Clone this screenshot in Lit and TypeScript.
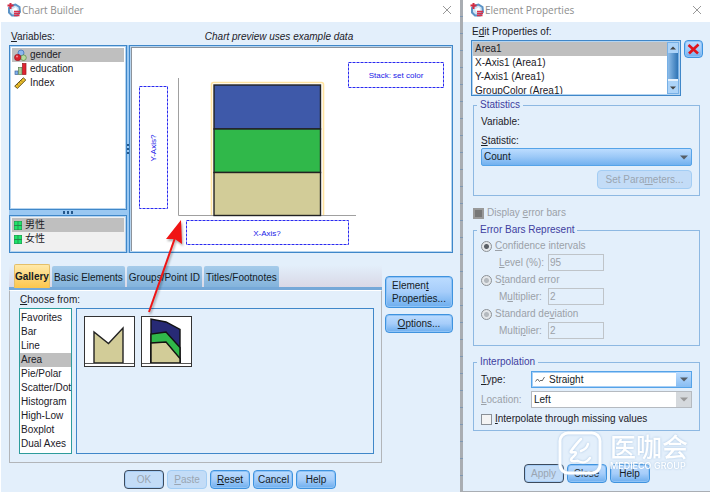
import { LitElement, html, css, svg } from "lit";
import { customElement, property, state } from "lit/decorators.js";
import { classMap } from "lit/directives/class-map.js";

const shared = css`
  * { box-sizing: border-box; }
  ul { list-style: none; margin: 0; padding: 0; }
  u { text-underline-offset: 1px; }
  button {
    font: inherit;
    color: #141c26;
    height: 19px;
    padding: 0 4px;
    border: 1px solid #3f93df;
    border-radius: 4px;
    background: linear-gradient(#bcdcff, #a6cdfa 50%, #6daeee);
    box-shadow: inset 0 0 0 1px #8fc3f6;
  }
  button:disabled {
    color: #9aa5b1;
    border-color: #a3cdf4;
    background: #c3dcf7;
    box-shadow: none;
  }
  button.default {
    border-color: #3c4a5c;
    box-shadow: inset 0 0 0 1px #a6cdf6;
  }
  .footer {
    display: flex;
    justify-content: center;
    gap: 3px;
  }
  .footer button { width: 40px; }
`;

@customElement("window-title")
class WindowTitle extends LitElement {
  @property() label = "";
  static styles = css`
    :host {
      display: flex;
      align-items: center;
      gap: 1px;
      height: 22px;
      padding: 0 8px 2px 7px;
      background: #fff;
      color: #8d8d8d;
      font: 10px/14px "Open Sans", sans-serif;
    }
    .name { flex: 1; font: inherit; margin: 0; }
    .close { border: 0; padding: 0; background: none; height: 10px; width: 10px; display: block; }
    svg { display: block; }
  `;
  render() {
    return html`
      <svg width="14" height="14" viewBox="0 0 14 14" aria-hidden="true">
        <path d="M5 2.5 8.5 1.5 12.5 4 13 9 10 12.5 5 12.5 2 9.5 2 5Z" fill="#cfe3f4" stroke="#5b93c6" stroke-width="2" />
        <path d="M5 6.5 9 4 10.5 7 7 9.5Z" fill="#fff" />
        <path d="M3.5 0V6M0.5 2.5H6.5" stroke="#d32a42" stroke-width="2" />
        <path d="M7 8.5H13M7 10.5H13M7 12.5H12.5" stroke="#d9304a" stroke-width="1.6" />
      </svg>
      <h1 class="name">${this.label}</h1>
      <button class="close" aria-label="Close window">
        <svg width="10" height="10" viewBox="0 0 10 10"><path d="M1 1 9 9M9 1 1 9" stroke="#999" stroke-width="1" /></svg>
      </button>
    `;
  }
}

const scaleIcons: Record<string, unknown> = {
  nominal: svg`
    <circle cx="7" cy="4" r="3" fill="#8db8ee" stroke="#3f72bd" stroke-width="0.8" />
    <circle cx="9.5" cy="8.7" r="2.8" fill="#b8dba0" stroke="#62904c" stroke-width="0.8" />
    <circle cx="3.7" cy="8.5" r="3.2" fill="#d9202c" stroke="#8f1820" stroke-width="0.6" />
    <circle cx="3" cy="7.5" r="0.9" fill="#f4a0a4" />`,
  ordinal: svg`
    <rect x="1" y="8" width="3" height="3.5" fill="#7eb2ee" stroke="#44669a" stroke-width="0.7" />
    <rect x="4.5" y="4.5" width="3.5" height="7" fill="#a9cf9c" stroke="#5b7f52" stroke-width="0.7" />
    <rect x="8.5" y="0.5" width="3.5" height="11" fill="#e02430" stroke="#971a22" stroke-width="0.7" />`,
  scale: svg`
    <path d="M0.7 9.2 9.3 0.8 11.8 3 3.4 11.4Z" fill="#edc02c" stroke="#574616" stroke-width="0.9" />
    <path d="M3 7.3 4 8.3M5 5.4 6 6.4M7 3.5 8 4.5" stroke="#4c3c10" stroke-width="0.9" />`,
};

@customElement("chart-preview")
class ChartPreview extends LitElement {
  static styles = css`
    :host {
      display: block;
      background: #fff;
      border: 1px solid #3f87c9;
      box-shadow: inset 0 0 0 1px #b5d4f0, inset 2px 2px 0 #8d939b;
    }
    svg { display: block; width: 100%; }
    .zone { fill: none; stroke: #2a2af0; stroke-dasharray: 3 1; }
    .prompt { fill: #2020e8; font: 8px "Liberation Sans", sans-serif; text-anchor: middle; }
    .bar { stroke: #222; stroke-width: 1.4; }
    .axis { stroke: #a0a0a0; }
  `;
  render() {
    return html`
      <svg height="206" viewBox="0 0 322 206" role="img" aria-label="Stacked area chart preview">
        <path class="axis" d="M48.5 32V169.5H226" fill="none" />
        <path d="M81.500 169V38.500Q81.500 36.500 83.500 36.500H191.500Q193.500 36.500 193.500 38.500V169" fill="none" stroke="#ffe3a0" stroke-width="1.600" />
        <rect class="bar" x="84" y="39" width="106.500" height="44" fill="#3e59a9" />
        <rect class="bar" x="84" y="83" width="106.500" height="43.500" fill="#30b84a" />
        <rect class="bar" x="84" y="126.500" width="106.500" height="43" fill="#d2cc98" />
        <rect class="zone" x="9.500" y="40.500" width="28" height="122" />
        <rect class="zone" x="56.500" y="174.500" width="162" height="24" />
        <rect class="zone" x="218.500" y="16.500" width="95" height="25" />
        <text class="prompt" x="266" y="32">Stack: set color</text>
        <text class="prompt" x="137" y="190">X-Axis?</text>
        <text class="prompt" transform="translate(26 102) rotate(-90)">Y-Axis?</text>
      </svg>
    `;
  }
}

@customElement("chart-builder")
class ChartBuilder extends LitElement {
  @state() private category = "Area";
  private variables = [
    { name: "gender", scale: "nominal" },
    { name: "education", scale: "ordinal" },
    { name: "Index", scale: "scale" },
  ];
  private categories = ["Favorites", "Bar", "Line", "Area", "Pie/Polar", "Scatter/Dot", "Histogram", "High-Low", "Boxplot", "Dual Axes"];
  static styles = [shared, css`
    :host { display: flex; flex-direction: column; position: relative; }
    .body { flex: 1; background: #e3effb; padding: 9px 7px 4px 8px; margin-left: 1px; }
    .captions { display: grid; grid-template-columns: 120px 1fr; line-height: 12px; padding-left: 2px; margin-bottom: 2px; }
    .captions em { text-align: center; padding-right: 26px; }
    .upper { display: grid; grid-template-columns: 118px 2px 1fr; }
    .lists { display: flex; flex-direction: column; }
    .box { border: 1px solid #3f87c9; box-shadow: inset 0 0 0 1px #b5d4f0; background: #fff; padding: 2px; }
    .box li { display: flex; align-items: center; gap: 3px; height: 14px; padding-left: 2px; }
    .box li.on, .categories li.on { background: #bfbfbf; }
    .variables { flex: 1; }
    .values { height: 38px; background: #f0f0f0; }
    .hbar, .vbar { display: flex; justify-content: center; align-items: center; background: #9ac8f2; }
    .hbar { height: 5px; }
    .hbar i, .vbar i { flex: none; width: 11px; height: 3px; background: repeating-linear-gradient(90deg, #24588c 0 2px, transparent 2px 4px); }
    .vbar i { width: 3px; height: 11px; background: repeating-linear-gradient(#24588c 0 2px, transparent 2px 4px); }
    .lower { display: grid; grid-template-columns: 1fr 68px; gap: 3px; margin-top: 12px; }
    .tabs { display: flex; align-items: flex-end; gap: 2px; padding-left: 5px; height: 25px; border-bottom: 3px solid #75a8d8; background: linear-gradient(#e3effb, #d9d8e6); }
    .tabs button { height: 21px; padding: 2px 2px 0; border: 0; border-radius: 2px 2px 0 0; background: linear-gradient(#a5cbea, #83b3dc); box-shadow: none; white-space: nowrap; }
    .tabs button.on { height: 24px; padding: 0; font-weight: bold; background: linear-gradient(#ffe9a9, #fdc64c); border: 1px solid #e4bf69; border-bottom: 0; margin-bottom: -1px; }
    .panel { border: 1px solid #b2b5b9; border-top-color: #fff; padding: 3px 7px 8px 9px; }
    .choose { display: block; line-height: 12px; padding-left: 1px; margin-bottom: 2px; }
    .chooser { display: grid; grid-template-columns: 53px 1fr; gap: 4px; }
    .categories { border: 1px solid #2e9c9c; background: #fff; padding: 2px 0; white-space: nowrap; }
    .categories li { height: 14px; line-height: 14px; padding-left: 1px; }
    .gallery { border: 1px solid #3f87c9; padding: 7px; display: flex; align-items: flex-start; gap: 6px; }
    .gallery button { width: 51px; height: 51px; padding: 0; border: 1px solid #333; border-radius: 0; background: #fff; box-shadow: none; }
    .gallery svg { display: block; }
    .side { display: flex; flex-direction: column; gap: 6px; padding-top: 11px; }
    .side .tall { height: 32px; text-align: left; padding: 0 6px; line-height: 13px; }
    .footer { margin: 7px 2px 0 0; }
    .arrow { position: absolute; left: 140px; top: 215px; pointer-events: none; filter: drop-shadow(1px 2px 1px #00000055); }
  `];
  render() {
    return html`
      <window-title label="Chart Builder"></window-title>
      <div class="body">
        <div class="captions"><span id="vars"><u>V</u>ariables:</span><em>Chart preview uses example data</em></div>
        <div class="upper">
          <div class="lists">
            <ul class="box variables" role="listbox" aria-labelledby="vars">
              ${this.variables.map((v, i) => html`<li role="option" aria-selected=${i === 0} class=${classMap({ on: i === 0 })}>
                <svg width="13" height="12" viewBox="0 0 13 12">${scaleIcons[v.scale]}</svg>${v.name}</li>`)}
            </ul>
            <div class="hbar"><i></i></div>
            <ul class="box values" role="listbox" aria-label="Values">
              ${["男性", "女性"].map((v, i) => html`<li role="option" aria-selected=${i === 0} class=${classMap({ on: i === 0 })}>
                <svg width="8" height="9" viewBox="0 0 8 9"><rect width="8" height="9" fill="#27864c" /><path d="M0.500 0.500H3.600V4H0.500ZM4.400 0.500H7.500V4H4.400ZM0.500 5H3.600V8.500H0.500ZM4.400 5H7.500V8.500H4.400Z" fill="#1ee46a" /></svg>${v}</li>`)}
            </ul>
          </div>
          <div class="vbar"><i></i></div>
          <chart-preview></chart-preview>
        </div>
        <div class="lower">
          <div>
            <div class="tabs" role="tablist">
              <button class="on" role="tab" aria-selected="true">Gallery</button>
              <button role="tab">Basic Elements</button>
              <button role="tab">Groups/Point ID</button>
              <button role="tab">Titles/Footnotes</button>
            </div>
            <div class="panel">
              <span class="choose" id="choose"><u>C</u>hoose from:</span>
              <div class="chooser">
                <ul class="categories" role="listbox" aria-labelledby="choose">
                  ${this.categories.map((c) => html`<li role="option" aria-selected=${c === this.category}
                    class=${classMap({ on: c === this.category })} @click=${() => (this.category = c)}>${c}</li>`)}
                </ul>
                <div class="gallery">
                  <button aria-label="Simple area">
                    <svg width="49" height="49" viewBox="0 0 49 49">
                      <path d="M9 46V15L23.500 26.500 38 11V46Z" fill="#d2cc98" stroke="#222" stroke-width="1.400" />
                      <path d="M0 46.500H49" stroke="#555" />
                    </svg>
                  </button>
                  <button aria-label="Stacked area">
                    <svg width="49" height="49" viewBox="0 0 49 49">
                      <g stroke="#111" stroke-width="1.400">
                        <path d="M9 46V2L24 5 38 12.500V46Z" fill="#272a75" />
                        <path d="M9 46V17L24 15 38 30.500V46Z" fill="#30b84a" />
                        <path d="M9 46V26L24 25 38 41.500V46Z" fill="#d2cc98" />
                      </g>
                      <path d="M0 46.500H49" stroke="#555" />
                    </svg>
                  </button>
                </div>
              </div>
            </div>
          </div>
          <div class="side">
            <button class="tall">Elemen<u>t</u><br />Properties...</button>
            <button><u>O</u>ptions...</button>
          </div>
        </div>
        <div class="footer">
          <button class="default" disabled>OK</button>
          <button disabled><u>P</u>aste</button>
          <button><u>R</u>eset</button>
          <button>Cancel</button>
          <button>Help</button>
        </div>
      </div>
      <svg class="arrow" width="50" height="100" viewBox="0 0 50 100" aria-hidden="true">
        <path d="M9 97 36 20" stroke="#f01414" stroke-width="2" />
        <path d="M41 5 42 29 35 24 26 24Z" fill="#f01414" />
      </svg>
    `;
  }
}

@customElement("element-properties")
class ElementProperties extends LitElement {
  static styles = [shared, css`
    :host { display: flex; flex-direction: column; position: relative; border-bottom: 2px solid #a9aeb4; }
    .body { flex: 1; display: flex; flex-direction: column; background: #e3effb; padding: 4px 10px 8px; }
    .caption { line-height: 12px; margin: 0 0 2px -1px; }
    .targets { display: flex; gap: 3px; margin: 0 -3px 0 -2px; align-items: flex-start; }
    .list { flex: 1; display: flex; height: 56px; border: 1px solid #3f87c9; box-shadow: inset 0 0 0 1px #b5d4f0; background: #fff; padding: 1px; }
    .list ul { flex: 1; overflow: hidden; }
    .list li { height: 14px; line-height: 14px; padding-left: 2px; }
    .list li.on { background: #bfbfbf; }
    .scroll { width: 12px; display: flex; flex-direction: column; background: #acd3f8; border: 1px solid #77b0e6; }
    .scroll svg { display: block; }
    .thumb { flex: 1; background: linear-gradient(90deg, #8dbce8, #2f74b5); border-bottom: 2px solid #e8f2fc; margin-bottom: 2px; }
    .remove { width: 19px; height: 18px; padding: 0; display: flex; align-items: center; justify-content: center; }
    fieldset { margin: 0; padding: 0 7px 6px; border: 1px solid #8db8e2; min-width: 0; display: flex; flex-direction: column; }
    legend { padding: 0 3px; margin-left: -4px; color: #40409f; line-height: 12px; height: 12px; }
    .stats { margin-top: 3px; }
    .line { line-height: 12px; }
    .gap { margin: 5px 0 7px; }
    select, input[type="text"] { font: inherit; color: #141c26; width: 100%; min-width: 0; margin: 0; }
    select { appearance: none; height: 17px; padding: 0 2px; border: 1px solid #55a3e8; border-radius: 0; background: #fff; opacity: 1; }
    .pick { position: relative; display: flex; flex: 1; }
    .pick .drop { position: absolute; right: 1px; top: 1px; bottom: 1px; width: 15px; display: grid; place-items: center; background: linear-gradient(#bcdcff, #88bdf2); color: #555d66; pointer-events: none; }
    .pick .wave { position: absolute; left: 4px; top: 5px; pointer-events: none; }
    .pick .indent { padding-left: 17px; box-shadow: inset 0 0 0 1px #a8d0f7; }
    .pick.count { flex: none; margin: 1px 0 4px; }
    .count select { height: 18px; border-radius: 2px; background: linear-gradient(#bcdcff, #9bc8f7 50%, #72b1ef); }
    .pick.count .drop { background: none; }
    .off select { border-color: #b5bac0; }
    .pick.off .drop { background: #d5d9dd; color: #999; }
    .params { align-self: flex-end; width: 95px; }
    label.tick { display: flex; align-items: center; gap: 3px; line-height: 12px; height: 12px; }
    .dim { color: #9ba1a8; }
    input[type="checkbox"], input[type="radio"] { appearance: none; margin: 0; width: 11px; height: 11px; border: 1px solid #8a9097; background: #f4f4f4; }
    input[type="checkbox"]:disabled { background: #777; border: 2px solid #999; }
    input[type="radio"] { border: 1px solid #8c9196; border-radius: 6px; background: radial-gradient(#b4b9be 0 2px, #e4e7ea 3px); }
    input[type="radio"]:checked { background: radial-gradient(#5b6066 0 2px, #e4e7ea 3px); }
    .display { margin: 11px 0 5px; }
    .amount { display: grid; grid-template-columns: 49px 56px; align-items: center; margin: 2px 0 4px 18px; height: 16px; white-space: nowrap; }
    .amount:last-child { margin-bottom: 1px; }
    .amount input { height: 17px; border: 1px solid #bfc4c9; background: transparent; color: #9ba1a8; padding: 0 1px; }
    .error .first { margin-top: 4px; }
    .interp { margin-top: 10px; padding-bottom: 5px; }
    .row { display: flex; align-items: center; margin-top: 3px; }
    .row label { width: 50px; }
    .interp .tick { margin-top: 5px; }
    .footer { margin: auto 0 0; }
    .mark { position: absolute; right: 22px; top: 431px; display: flex; gap: 8px; color: #fff; pointer-events: none; filter: drop-shadow(0 0 1px #a9c6e4); }
    .words { display: flex; flex-direction: column; width: 78px; white-space: nowrap; }
    .cn { font: 500 26px/29px "Noto Sans CJK SC", sans-serif; }
    .en { font: 500 9px/12px Inter, sans-serif; }
  `];
  private drop() {
    return html`<svg width="8" height="5" viewBox="0 0 8 5"><path d="M0 0.500H8L4 4.500Z" fill="currentColor" /></svg>`;
  }
  render() {
    return html`
      <window-title label="Element Properties"></window-title>
      <div class="body">
        <span class="caption" id="edit">E<u>d</u>it Properties of:</span>
        <div class="targets">
          <div class="list">
            <ul role="listbox" aria-labelledby="edit">
              ${["Area1", "X-Axis1 (Area1)", "Y-Axis1 (Area1)", "GroupColor (Area1)"].map((t, i) => html`
                <li role="option" aria-selected=${i === 0} class=${classMap({ on: i === 0 })}>${t}</li>`)}
            </ul>
            <div class="scroll" aria-hidden="true">
              <svg width="10" height="10" viewBox="0 0 10 10"><path d="M2 6.500H8L5 3.500Z" fill="#444" /></svg>
              <div class="thumb"></div>
              <svg width="10" height="10" viewBox="0 0 10 10"><path d="M2 3.500H8L5 6.500Z" fill="#444" /></svg>
            </div>
          </div>
          <button class="remove" aria-label="Remove">
            <svg width="13" height="12" viewBox="0 0 13 12"><path d="M1.500 2 11 10.500M11.500 1.500 2 10.500" stroke="#e0141c" stroke-width="2.600" /></svg>
          </button>
        </div>
        <fieldset class="stats">
          <legend>Statistics</legend>
          <span class="line gap">Variable:</span>
          <label class="line" for="stat"><u>S</u>tatistic:</label>
          <span class="pick count"><select id="stat"><option>Count</option></select><span class="drop">${this.drop()}</span></span>
          <button class="params" disabled>Set Para<u>m</u>eters...</button>
        </fieldset>
        <label class="tick dim display"><input type="checkbox" disabled /><span>Display <u>e</u>rror bars</span></label>
        <fieldset class="error">
          <legend>Error Bars Represent</legend>
          <label class="tick dim first"><input type="radio" name="bars" checked disabled /><span><u>C</u>onfidence intervals</span></label>
          <label class="amount dim"><span><u>L</u>evel (%):</span><input type="text" value="95" disabled /></label>
          <label class="tick dim"><input type="radio" name="bars" disabled /><span>S<u>t</u>andard error</span></label>
          <label class="amount dim"><span>M<u>u</u>ltiplier:</span><input type="text" value="2" disabled /></label>
          <label class="tick dim"><input type="radio" name="bars" disabled /><span>Standard de<u>v</u>iation</span></label>
          <label class="amount dim"><span>Multi<u>p</u>lier:</span><input type="text" value="2" disabled /></label>
        </fieldset>
        <fieldset class="interp">
          <legend>Interpolation</legend>
          <div class="row"><label for="type"><u>T</u>ype:</label>
            <span class="pick"><select id="type" class="indent"><option>Straight</option></select>
              <svg class="wave" width="10" height="7" viewBox="0 0 10 7"><path d="M0.500 5.500 2.500 3 4.500 5.500 6 4 7 5 9.500 1" fill="none" stroke="#555" stroke-width="0.900" /></svg>
              <span class="drop">${this.drop()}</span></span></div>
          <div class="row"><label class="dim" for="loc"><u>L</u>ocation:</label>
            <span class="pick off"><select id="loc" disabled><option>Left</option></select><span class="drop">${this.drop()}</span></span></div>
          <label class="tick"><input type="checkbox" /><span><u>I</u>nterpolate through missing values</span></label>
        </fieldset>
        <div class="footer">
          <button class="default" disabled>Apply</button>
          <button>Close</button>
          <button>Help</button>
        </div>
      </div>
      <div class="mark">
        <svg width="44" height="44" viewBox="0 0 44 44" fill="none" stroke="#fff" stroke-linecap="round" stroke-linejoin="round">
          <rect x="2" y="2" width="40" height="40" rx="8" stroke-width="3" />
          <path d="M23 8C19 12 16 16 13 20C11 23 18 20 18 22C18 25 13 26 13 29C14 32 20 29 20 30" stroke-width="2.500" />
          <path d="M30 13C29 17 26 19 23 20M20 30C26 33 29 31 32 27" stroke-width="2.500" />
        </svg>
        <div class="words"><span class="cn">医咖会</span><span class="en">MEDIECO GROUP</span></div>
      </div>
    `;
  }
}

@customElement("app-root")
class AppRoot extends LitElement {
  static styles = css`
    :host {
      display: grid;
      grid-template-columns: minmax(0, 1fr) 3px minmax(0, 247px);
      min-height: 100vh;
      color: #1b2027;
      font: 10px/14px "Liberation Sans", "Noto Sans CJK SC", sans-serif;
    }
    .desk { background: repeating-linear-gradient(#a9adb2 0 16px, #7f97b2 16px 17px); }
  `;
  render() {
    return html`<chart-builder></chart-builder><div class="desk"></div><element-properties></element-properties>`;
  }
}
